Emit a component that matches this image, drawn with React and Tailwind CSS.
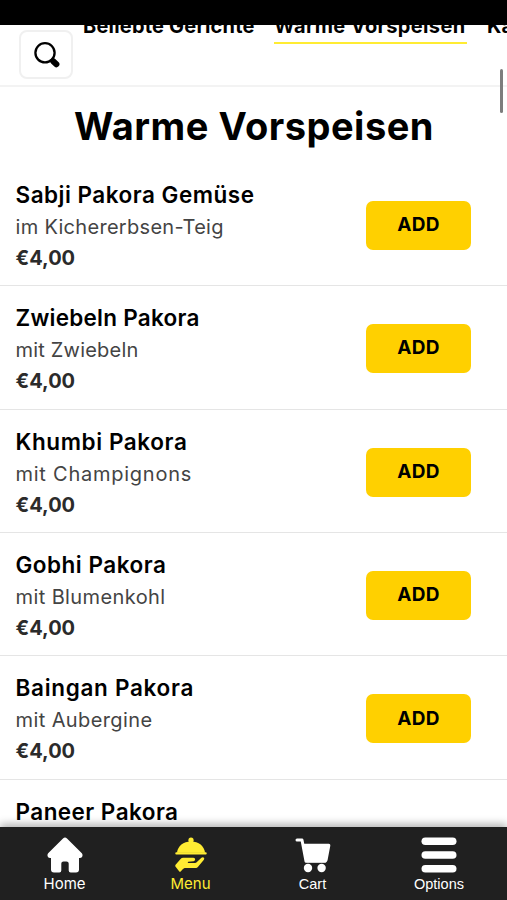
const categories = [
  { name: "Beliebte Gerichte", className: "w-[171px] tracking-[0.2px]" },
  { name: "Warme Vorspeisen", className: "w-[193px] tracking-[0.4px]", active: true },
  { name: "Kalte Vorspeisen", className: "w-[180px] tracking-[0.2px]" },
];

const dishes = [
  { name: "Sabji Pakora Gemüse", description: "im Kichererbsen-Teig", price: "€4,00", nameClass: "tracking-[0.5px]", textClass: "tracking-[0.3px]" },
  { name: "Zwiebeln Pakora", description: "mit Zwiebeln", price: "€4,00", nameClass: "tracking-[0.25px]", textClass: "tracking-[0.2px]" },
  { name: "Khumbi Pakora", description: "mit Champignons", price: "€4,00", nameClass: "tracking-[0.6px]", textClass: "tracking-[0.75px]" },
  { name: "Gobhi Pakora", description: "mit Blumenkohl", price: "€4,00", nameClass: "tracking-[0.5px]", textClass: "tracking-[0.4px]" },
  { name: "Baingan Pakora", description: "mit Aubergine", price: "€4,00", nameClass: "tracking-[0.7px]", textClass: "tracking-[0.4px]" },
];

const SearchIcon = () => (
  <svg className="ml-[2px]" width="26" height="26" viewBox="0 0 26 26" fill="none" stroke="black">
    <circle cx="11" cy="10.8" r="9.6" strokeWidth="2.3" />
    <path d="M17.2 17.2 19 19" strokeWidth="4" />
    <path d="M19.2 19.2 22.4 22.2" strokeWidth="6" strokeLinecap="round" />
  </svg>
);

const HomeIcon = () => (
  <svg width="36" height="36" viewBox="0 0 36 36" fill="currentColor">
    <path d="M16 1.4a2.9 2.9 0 0 1 4 0L34.6 16c1.8 1.8.9 5-1.7 5h-.9v11.6a3 3 0 0 1-3 3h-5.3a2 2 0 0 1-2-2v-7a2.2 2.2 0 0 0-2.2-2.2h-3a2.2 2.2 0 0 0-2.2 2.2v7a2 2 0 0 1-2 2H7a3 3 0 0 1-3-3V21h-.9c-2.6 0-3.5-3.2-1.7-5Z" />
  </svg>
);

const MenuIcon = () => (
  <svg width="32" height="36" viewBox="0 0 32 36" fill="currentColor">
    <circle cx="16" cy="3.2" r="2.6" />
    <path d="M2 15.8C2.7 9 8.3 4.5 16 4.5s13.3 4.5 14 11.3Z" />
    <rect x="0.3" y="15.3" width="31.4" height="2.3" rx="1" />
    <path d="M.8 27.5 5.6 22c.7-.8 1.5-1.2 2.6-1.2h10.1c2.4 0 2.5 3.3.2 3.5l-5.2.5c-.7.1-.7 1.2 0 1.2h6.1c1.1 0 1.8-.4 2.5-1.1l4.5-4.1c1.7-1.5 3.7.2 2.5 1.9l-5.6 6.8c-.9 1-1.7 1.5-3 1.5h-9.5c-1.4 0-2.2.3-3.1 1.3l-2 2.1c-.5.5-1 .5-1.4 0L.8 30.1c-.7-1-.7-1.8 0-2.6Z" />
  </svg>
);

const CartIcon = () => (
  <svg width="36" height="36" viewBox="0 0 36 36" fill="currentColor">
    <path d="M2 3h5L11 24.3h19" fill="none" stroke="currentColor" strokeWidth="3" strokeLinecap="round" strokeLinejoin="round" />
    <path d="M7.8 6.8h26c1 0 1.7.9 1.5 1.9L32.6 23c-.2 1.1-1 2.2-2.1 2.2H11.5Z" />
    <circle cx="13" cy="31" r="4.2" />
    <circle cx="26.6" cy="31" r="4.2" />
  </svg>
);

const OptionsIcon = () => (
  <svg width="36" height="36" viewBox="0 0 36 36" fill="currentColor">
    <rect x="0.5" y="0.4" width="35" height="7.6" rx="3.8" />
    <rect x="0.5" y="14.2" width="35" height="7.6" rx="3.8" />
    <rect x="0.5" y="28" width="35" height="7.6" rx="3.8" />
  </svg>
);

const Header = () => (
  <header className="flex h-[61.5px] shrink-0 overflow-hidden border-b-2 border-[#f3f3f3]">
    <button aria-label="Suche" className="mt-[5px] ml-[19px] flex h-[49px] w-[54px] shrink-0 items-center justify-center rounded-lg border-2 border-[#f0f0f0]">
      <SearchIcon />
    </button>
    <nav className="-mt-[14px] ml-[10px] flex gap-[20px]">
      {categories.map(({ name, className, active }) => (
        <div
          key={name}
          className={`h-[32.5px] shrink-0 text-[20px] leading-[30px] font-bold whitespace-nowrap ${className} ${active ? "border-b-[2.5px] border-[#ffec33]" : ""}`}
        >
          {name}
        </div>
      ))}
    </nav>
  </header>
);

const Dish = ({ name, description, price, nameClass, textClass }) => (
  <li className="flex h-[123.4px] shrink-0 items-center justify-between border-b border-[#e5e5e5] pt-[2.5px] pr-[36px] pl-[15.5px]">
    <div>
      <h2 className={`text-[22.5px] leading-[33px] font-semibold ${nameClass}`}>{name}</h2>
      <p className={`text-[20px] leading-[32px] text-[#444] ${textClass}`}>{description}</p>
      <p className="text-[20px] leading-[30px] font-bold text-[#2b2b2b]">{price}</p>
    </div>
    <button className="h-[49px] w-[105px] rounded-[7px] bg-[#ffd000] text-[19px] font-bold tracking-[0.3px]">ADD</button>
  </li>
);

const navItems = [
  { label: "Home", Icon: HomeIcon, className: "w-[129px] text-[15px] font-[Inter,sans-serif]" },
  { label: "Menu", Icon: MenuIcon, className: "w-[123px] text-[15px] font-[Inter,sans-serif] text-[#ffec33]" },
  { label: "Cart", Icon: CartIcon, className: "w-[121px] text-[14.5px] font-['Liberation_Sans',sans-serif]" },
  { label: "Options", Icon: OptionsIcon, className: "w-[132px] text-[14.5px] font-['Liberation_Sans',sans-serif]" },
];

export default function App() {
  return (
    <div className="flex h-[900px] w-[507px] flex-col overflow-hidden bg-white font-[Inter,sans-serif] text-black">
      <div className="h-[25px] shrink-0 bg-black" />
      <Header />
      <main className="min-h-0 flex-1 overflow-hidden">
        <h1 className="pt-[14px] pl-px text-center text-[38px] leading-[50px] font-bold tracking-[0.5px]">Warme Vorspeisen</h1>
        <ul className="mt-[12.3px] flex flex-col">
          {dishes.map((dish) => (
            <Dish key={dish.name} {...dish} />
          ))}
          <li className="pt-[15px] pl-[15.5px]">
            <h2 className="text-[22.5px] leading-[33px] font-semibold tracking-[0.45px]">Paneer Pakora</h2>
          </li>
        </ul>
      </main>
      <nav className="relative flex h-[73.5px] shrink-0 bg-[#202020] text-white shadow-[0_-3px_8px_rgba(0,0,0,0.3)]">
        {navItems.map(({ label, Icon, className }) => (
          <button key={label} className={`flex flex-col items-center pt-[10px] ${className}`}>
            <Icon />
            <span className="leading-[22px]">{label}</span>
          </button>
        ))}
      </nav>
      {/* scrollbar */}
      <div className="absolute top-[69px] left-[499.5px] h-[44px] w-[3.5px] rounded-full bg-[#7d7d7d]" />
    </div>
  );
}
